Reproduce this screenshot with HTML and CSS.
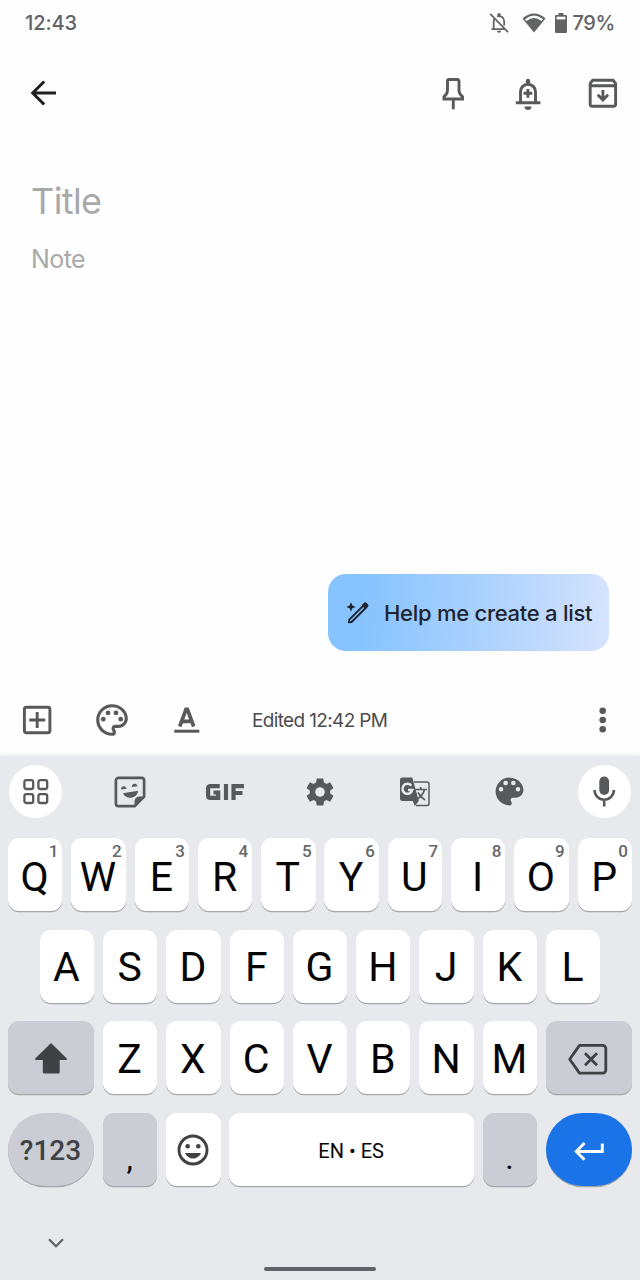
FILE: index.html
```html
<!DOCTYPE html>
<html lang="en">
<head>
<meta charset="utf-8">
<title>Note editor</title>
<link rel="stylesheet" href="styles.css">
</head>
<body>
<div class="screen">
  <header class="status">
    <span class="clock">12:43</span>
    <div class="status-icons">
      <svg class="dnd" width="22" height="22" viewBox="0 0 22 22"><g fill="none" stroke="currentColor" stroke-width="1.8"><path d="M2.2 1.8 20 20.2M5.7 17V9.2a5 5 0 0 1 1-3M9 4.4c4-1.2 7.2 1.2 7.2 5.2v4M3.4 17.2H17"/></g><path d="M9.6 1.2h3v3h-3zM8.800 18.700h4.400a2.200 2 0 0 1-4.400 0z" fill="currentColor"/></svg>
      <svg class="wifi" width="24" height="20" viewBox="0 0 24 20"><path d="M.5 5.500Q12-4.600 23.500 5.500L12 19.500Z" fill="currentColor"/><path d="M3 6.200Q12-1.200 21 6.200L19.600 7.900Q12 2 4.400 7.900Z" fill="#fff"/></svg>
      <svg class="battery" width="12" height="20" viewBox="0 0 12 20"><path d="M3.500 0h5v2H11a1 1 0 0 1 1 1v16a1 1 0 0 1-1 1H1a1 1 0 0 1-1-1V3a1 1 0 0 1 1-1h2.500z" fill="currentColor"/><path d="M1.600 3.700h8.800v2.700H1.600z" fill="#fff"/></svg>
      <span class="percent">79%</span>
    </div>
  </header>

  <nav class="appbar">
    <svg class="back" width="38" height="38" viewBox="0 0 38 38"><path d="M32 19H9M20.200 7.500 8.700 19l11.500 11.500" fill="none" stroke="currentColor" stroke-width="3"/></svg>
    <div class="actions">
      <svg width="38" height="38" viewBox="0 0 38 38" fill="none" stroke="currentColor" stroke-width="2.900"><path d="M15 5.500h8.500a1.500 1.500 0 0 1 1.500 1.500v9.500c.2 3 1.300 4.500 3.500 6.200V25h-18.500v-2.300c2.200-1.700 3.300-3.200 3.500-6.200V7a1.500 1.500 0 0 1 1.500-1.500zM19.300 25v10.300"/></svg>
      <svg width="38" height="38" viewBox="0 0 38 38" fill="none" stroke="currentColor" stroke-width="2.900"><path d="M11.500 28V17.700a7.500 7.500 0 0 1 15 0V28M6.800 28.700h24.600M14.500 19.300h8.800M18.900 14.900v8.800"/><path d="M16.800 9V7a2.200 2.200 0 0 1 4.400 0v2zM15.500 32.500h7a3.500 3.400 0 0 1-7 0z" fill="currentColor" stroke="none"/></svg>
      <svg width="38" height="38" viewBox="0 0 38 38" fill="none" stroke="currentColor" stroke-width="2.900"><path d="M8.700 6.200h20.400l2.500 3.300v20.800a2 2 0 0 1-2 2H8.200a2 2 0 0 1-2-2V9.500z"/><path d="M6 11.800h26M18.900 16v9.500M13.700 20.700l5.200 5.200 5.200-5.200"/></svg>
    </div>
  </nav>

  <main class="note">
    <div class="note-title">Title</div>
    <div class="note-body">Note</div>
  </main>

  <div class="suggest">
    <button class="help">
      <svg width="26" height="26" viewBox="0 0 26 26"><path d="m6 2.200 1.400 3.300 3.300 1.400-3.300 1.400L6 11.600 4.600 8.300 1.300 6.900l3.300-1.400z" fill="currentColor"/><path d="M4.300 19.700 18.300 5.700l2.300 2.300L6.600 22l-2.700.4z" fill="none" stroke="currentColor" stroke-width="1.900" stroke-linejoin="round"/><path d="m16.800 5 2-2a2 2 0 0 1 2.800 0l1.300 1.300a2 2 0 0 1 0 2.800l-2 2z" fill="currentColor"/></svg>
      <span>Help me create a list</span>
    </button>
  </div>

  <div class="notebar">
    <svg width="38" height="38" viewBox="0 0 38 38" fill="none" stroke="currentColor" stroke-width="2.900"><rect x="6.400" y="6.300" width="25.500" height="25.500" rx="2"/><path d="M11.200 19h16M19.200 11v16"/></svg>
    <svg width="38" height="38" viewBox="0 0 24 24" fill="currentColor"><path d="M12 22C6.490 22 2 17.510 2 12S6.490 2 12 2s10 4.040 10 9c0 3.310-2.690 6-6 6h-1.770c-.28 0-.5.22-.5.500 0 .12.050.230.130.330.410.470.640 1.060.640 1.670A2.500 2.500 0 0 1 12 22zm0-18c-4.410 0-8 3.590-8 8s3.590 8 8 8c.28 0 .5-.22.500-.5a.54.54 0 0 0-.14-.35c-.41-.46-.63-1.050-.63-1.650a2.500 2.500 0 0 1 2.500-2.500H16c2.210 0 4-1.790 4-4 0-3.860-3.590-7-8-7z"/><circle cx="6.500" cy="11.500" r="1.500"/><circle cx="9.500" cy="7.500" r="1.500"/><circle cx="14.500" cy="7.500" r="1.500"/><circle cx="17.500" cy="11.500" r="1.500"/></svg>
    <svg width="38" height="38" viewBox="0 0 38 38" fill="none" stroke="currentColor"><path d="M11.700 25.500 18 8.300h1.400l6.300 17.200M14 20.300h9.500" stroke-width="3.700"/><path d="M6.300 30.200h25" stroke-width="3"/></svg>
    <span class="edited">Edited 12:42 PM</span>
    <svg class="more" width="38" height="38" viewBox="0 0 38 38" fill="currentColor"><circle cx="18.700" cy="9.700" r="3.300"/><circle cx="18.700" cy="19" r="3.300"/><circle cx="18.700" cy="28.300" r="3.300"/></svg>
  </div>

  <section class="keyboard">
    <div class="tools">
      <span class="tool round"><svg width="28" height="28" viewBox="0 0 28 28" fill="none" stroke="currentColor" stroke-width="2.300"><rect x="2.400" y="2.200" width="8.800" height="8.800" rx="2"/><rect x="16.400" y="2.200" width="8.800" height="8.800" rx="2"/><rect x="2.400" y="16.200" width="8.800" height="8.800" rx="2"/><rect x="16.400" y="16.200" width="8.800" height="8.800" rx="2"/></svg></span>
      <span class="tool"><svg width="34" height="34" viewBox="0 0 34 34"><path d="M5.500 2.900h23a2.600 2.600 0 0 1 2.600 2.600v16.200l-9.400 9.400H5.500a2.600 2.600 0 0 1-2.600-2.600v-23a2.600 2.600 0 0 1 2.600-2.600z" fill="none" stroke="currentColor" stroke-width="2.700"/><path d="M21.500 31v-4.500a5 5 0 0 1 5-5H31zM10 18.200l15-2.500c-.5 8.300-12.300 9.300-15 2.500zM8 14.500c0-4.200 4.900-4.400 5.700-.8zM18.700 12c.200-4.200 5.300-4.400 5.900-.8z" fill="currentColor"/></svg></span>
      <span class="tool"><svg width="40" height="18" viewBox="0 0 40 18" fill="none" stroke="currentColor" stroke-width="4.200"><path d="M14.700 3.100H5.600Q3.100 3.100 3.100 5.600v6.800q0 2.500 2.500 2.500h7.600V9.500H8.500M21 1v16M28.500 17V3.100h10.500M28.500 10h9"/></svg></span>
      <span class="tool"><svg width="34" height="34" viewBox="0 0 24 24" fill="currentColor"><path d="M19.140 12.940c.04-.3.060-.61.060-.94s-.02-.64-.07-.94l2.030-1.580a.49.490 0 0 0 .12-.61l-1.920-3.320a.49.490 0 0 0-.59-.22l-2.390.960a7 7 0 0 0-1.620-.94L14.400 2.810a.48.480 0 0 0-.48-.41h-3.840a.47.470 0 0 0-.47.410L9.250 5.350c-.59.240-1.130.570-1.620.940l-2.390-.96a.48.480 0 0 0-.59.220L2.740 8.870a.47.470 0 0 0 .12.610l2.030 1.580a7 7 0 0 0 0 1.880l-2.030 1.580a.49.490 0 0 0-.12.610l1.920 3.320c.12.220.37.290.59.220l2.390-.96c.5.380 1.030.700 1.620.940l.36 2.540c.05.240.240.410.480.410h3.840c.24 0 .44-.17.470-.41l.36-2.540a7 7 0 0 0 1.620-.94l2.390.96c.22.080.47 0 .59-.22l1.920-3.320a.47.470 0 0 0-.12-.61zM12 15.400A3.400 3.400 0 1 1 12 8.600a3.400 3.400 0 0 1 0 6.800z"/></svg></span>
      <span class="tool"><svg width="32" height="32" viewBox="0 0 32 32"><path d="M15 6h13a2 2 0 0 1 2 2v19.500a2 2 0 0 1-2 2H17" fill="none" stroke="currentColor" stroke-width="1.500"/><path d="M3.500 1.500h9.800L19.800 25l-4 5-2-5H3.500a2.500 2.500 0 0 1-2.500-2.500V4a2.500 2.500 0 0 1 2.500-2.500z" fill="currentColor"/><path d="M12.300 9.600A5 5 0 1 0 13.300 14H9" fill="none" stroke="#e8e9ed" stroke-width="2.500"/><path d="M16.500 13.500H28M21.700 11v2.500M25.500 13.500c-1 4-3.700 7.200-7 9.500M19 16.500c1.500 3 4 5.500 7 7.500" fill="none" stroke="currentColor" stroke-width="1.700"/></svg></span>
      <span class="tool"><svg width="37" height="37" viewBox="0 0 24 24" fill="currentColor"><path fill-rule="evenodd" d="M12 3a9 9 0 1 0 0 18c.83 0 1.500-.67 1.500-1.500 0-.39-.15-.74-.39-1.010A1.480 1.480 0 0 1 14.230 16H16c2.760 0 5-2.240 5-5 0-4.420-4.030-8-9-8zM6.500 12a1.500 1.500 0 1 1 0-3 1.500 1.500 0 0 1 0 3zm3-4a1.500 1.500 0 1 1 0-3 1.500 1.500 0 0 1 0 3zm5 0a1.500 1.500 0 1 1 0-3 1.500 1.500 0 0 1 0 3zm3 4a1.500 1.500 0 1 1 0-3 1.500 1.500 0 0 1 0 3z"/></svg></span>
      <span class="tool round"><svg width="28" height="34" viewBox="0 0 28 34"><rect x="9.300" y="1.500" width="9.800" height="18.500" rx="4.900" fill="currentColor"/><path d="M4.500 15a9.700 9.700 0 0 0 19.400 0M14.200 24.500V31.500" fill="none" stroke="currentColor" stroke-width="2.600"/></svg></span>
    </div>
    <div class="rows">
      <div class="row first">
        <span class="key">Q<sup>1</sup></span><span class="key">W<sup>2</sup></span><span class="key">E<sup>3</sup></span><span class="key">R<sup>4</sup></span><span class="key">T<sup>5</sup></span><span class="key">Y<sup>6</sup></span><span class="key">U<sup>7</sup></span><span class="key">I<sup>8</sup></span><span class="key">O<sup>9</sup></span><span class="key">P<sup>0</sup></span>
      </div>
      <div class="row">
        <span class="key">A</span><span class="key">S</span><span class="key">D</span><span class="key">F</span><span class="key">G</span><span class="key">H</span><span class="key">J</span><span class="key">K</span><span class="key">L</span>
      </div>
      <div class="row">
        <span class="key wide dim"><svg width="34" height="34" viewBox="0 0 34 34"><path d="M17 1 33 16.800q0 1.200-1 1.200h-6.300V30q0 1.500-1.500 1.500H10.300q-1.500 0-1.500-1.500V18H2q-1 0-1-1.200z" fill="currentColor"/></svg></span>
        <span class="key">Z</span><span class="key">X</span><span class="key">C</span><span class="key">V</span><span class="key">B</span><span class="key">N</span><span class="key">M</span>
        <span class="key wide dim"><svg width="42" height="34" viewBox="0 0 42 34" fill="none" stroke="currentColor" stroke-width="2.800"><path d="M12.500 3.400h23.300a3 3 0 0 1 3 3v21.700a3 3 0 0 1-3 3H12.500L2.700 17.200z" stroke-linejoin="round"/><path d="m18 11.200 12 12M30 11.200l-12 12"/></svg></span>
      </div>
      <div class="row">
        <span class="key wide dim pill symbols">?123</span>
        <span class="key dim low">,</span>
        <span class="key ink"><svg width="34" height="34" viewBox="0 0 34 34"><circle cx="17" cy="16" r="14" fill="none" stroke="currentColor" stroke-width="2.900"/><circle cx="11.700" cy="12.300" r="2.300" fill="currentColor"/><circle cx="22.300" cy="12.300" r="2.300" fill="currentColor"/><path d="M9 19h16c-3 7.300-13 7.300-16 0z" fill="currentColor"/></svg></span>
        <span class="key space">EN • ES</span>
        <span class="key dim low">.</span>
        <span class="key wide pill enter"><svg width="32" height="22" viewBox="0 0 32 22" fill="none" stroke="currentColor" stroke-width="2.900"><path d="M29.300 3.500v8H4M11.500 3 3.300 11.500l8.200 8.200"/></svg></span>
      </div>
    </div>
    <footer class="sysnav">
      <svg width="20" height="14" viewBox="0 0 20 14"><path d="m3 3.300 7 7 7-7" fill="none" stroke="currentColor" stroke-width="2.200"/></svg>
      <span class="handle"></span>
    </footer>
  </section>
</div>
</body>
</html>
```
FILE: styles.css
```css
* { box-sizing: border-box; }
body { margin: 0; background: #fefefe; }
svg { display: block; flex: none; }
.screen {
  width: 640px;
  height: 1280px;
  display: flex;
  flex-direction: column;
  overflow: hidden;
  font-family: Inter, Roboto, sans-serif;
  color: #58595b;
}
.status {
  height: 46px;
  padding: 0 25px;
  display: flex;
  align-items: center;
  justify-content: space-between;
  font-size: 20px;
  font-weight: 500;
  color: #626365;
}
.clock { letter-spacing: -0.1px; }
.status-icons { display: flex; align-items: center; }
.wifi { margin-left: 12px; }
.battery { margin-left: 9px; }
.percent { margin-left: 6px; letter-spacing: -0.4px; }
.appbar {
  height: 94px;
  padding: 0 18px 0 24px;
  display: flex;
  align-items: center;
  justify-content: space-between;
}
.back { color: #1f1f1f; }
.actions { display: flex; gap: 37px; }
.note { flex: 1; padding: 36px 31px 0; color: #a9a9a9; }
.note-title { font-size: 36px; line-height: 50px; letter-spacing: -0.6px; }
.note-body { font-size: 25px; line-height: 34px; margin-top: 16px; letter-spacing: -0.6px; }
.suggest {
  display: flex;
  justify-content: flex-end;
  padding: 0 31px 32px 0;
}
.help {
  width: 281px;
  height: 77px;
  border: 0;
  border-radius: 18px;
  padding: 0 0 0 17px;
  display: flex;
  align-items: center;
  gap: 13px;
  background: linear-gradient(94deg, #86c3ff 12%, #a9d0fd 52%, #d3e2fd 97%);
  color: #1b2430;
  font: 500 22px Inter, sans-serif;
  letter-spacing: -0.27px;
  white-space: nowrap;
}
.notebar {
  height: 73px;
  padding: 0 18px;
  display: flex;
  align-items: center;
  gap: 37px;
}
.edited { margin: 1px 0 0 9px; font-size: 19px; letter-spacing: -0.65px; color: #4b4c4e; white-space: nowrap; }
.more { margin-left: auto; }
.keyboard {
  height: 524px;
  background: #e8e9ed;
  box-shadow: 0 -1px 4px rgba(60, 64, 67, .12);
  font-family: Roboto, sans-serif;
  display: flex;
  flex-direction: column;
}
.tools {
  height: 71px;
  padding: 0 9px;
  display: flex;
  align-items: center;
  justify-content: space-between;
}
.tool {
  width: 53px;
  height: 53px;
  display: flex;
  align-items: center;
  justify-content: center;
}
.round { border-radius: 50%; background: #fff; }
.rows { padding-top: 11px; display: flex; flex-direction: column; gap: 18.700px; }
.row { display: flex; justify-content: center; gap: 8.900px; }
.key {
  position: relative;
  width: 54.400px;
  height: 73px;
  padding: 3px 1px 0 0;
  border-radius: 11px;
  background: #fff;
  box-shadow: 0 1.200px 0.500px #a5a6a9;
  display: flex;
  align-items: center;
  justify-content: center;
  font-size: 41px;
  line-height: 1;
  color: #050505;
}
.first .key { padding-top: 5px; }
.key sup {
  position: absolute;
  top: 5px;
  right: 4px;
  font-size: 17px;
  line-height: 17px;
  font-weight: 500;
  color: #66676a;
}
.wide { width: 86px; }
.dim { background: #cacdd4; }
.wide.dim, .ink { color: #404145; }
.pill { border-radius: 37px; }
.symbols { font-size: 28px; font-weight: 500; }
.low { font-size: 32px; padding-top: 16px; }
.space { width: 244.400px; font-size: 20px; }
.enter { background: #1b73e8; color: #fff; }
.sysnav {
  flex: 1;
  display: flex;
  flex-direction: column;
  justify-content: space-between;
  padding: 50px 46px 9px;
  color: #5f6064;
}
.handle {
  align-self: center;
  width: 112px;
  height: 4px;
  border-radius: 2px;
  background: #626368;
}
```
